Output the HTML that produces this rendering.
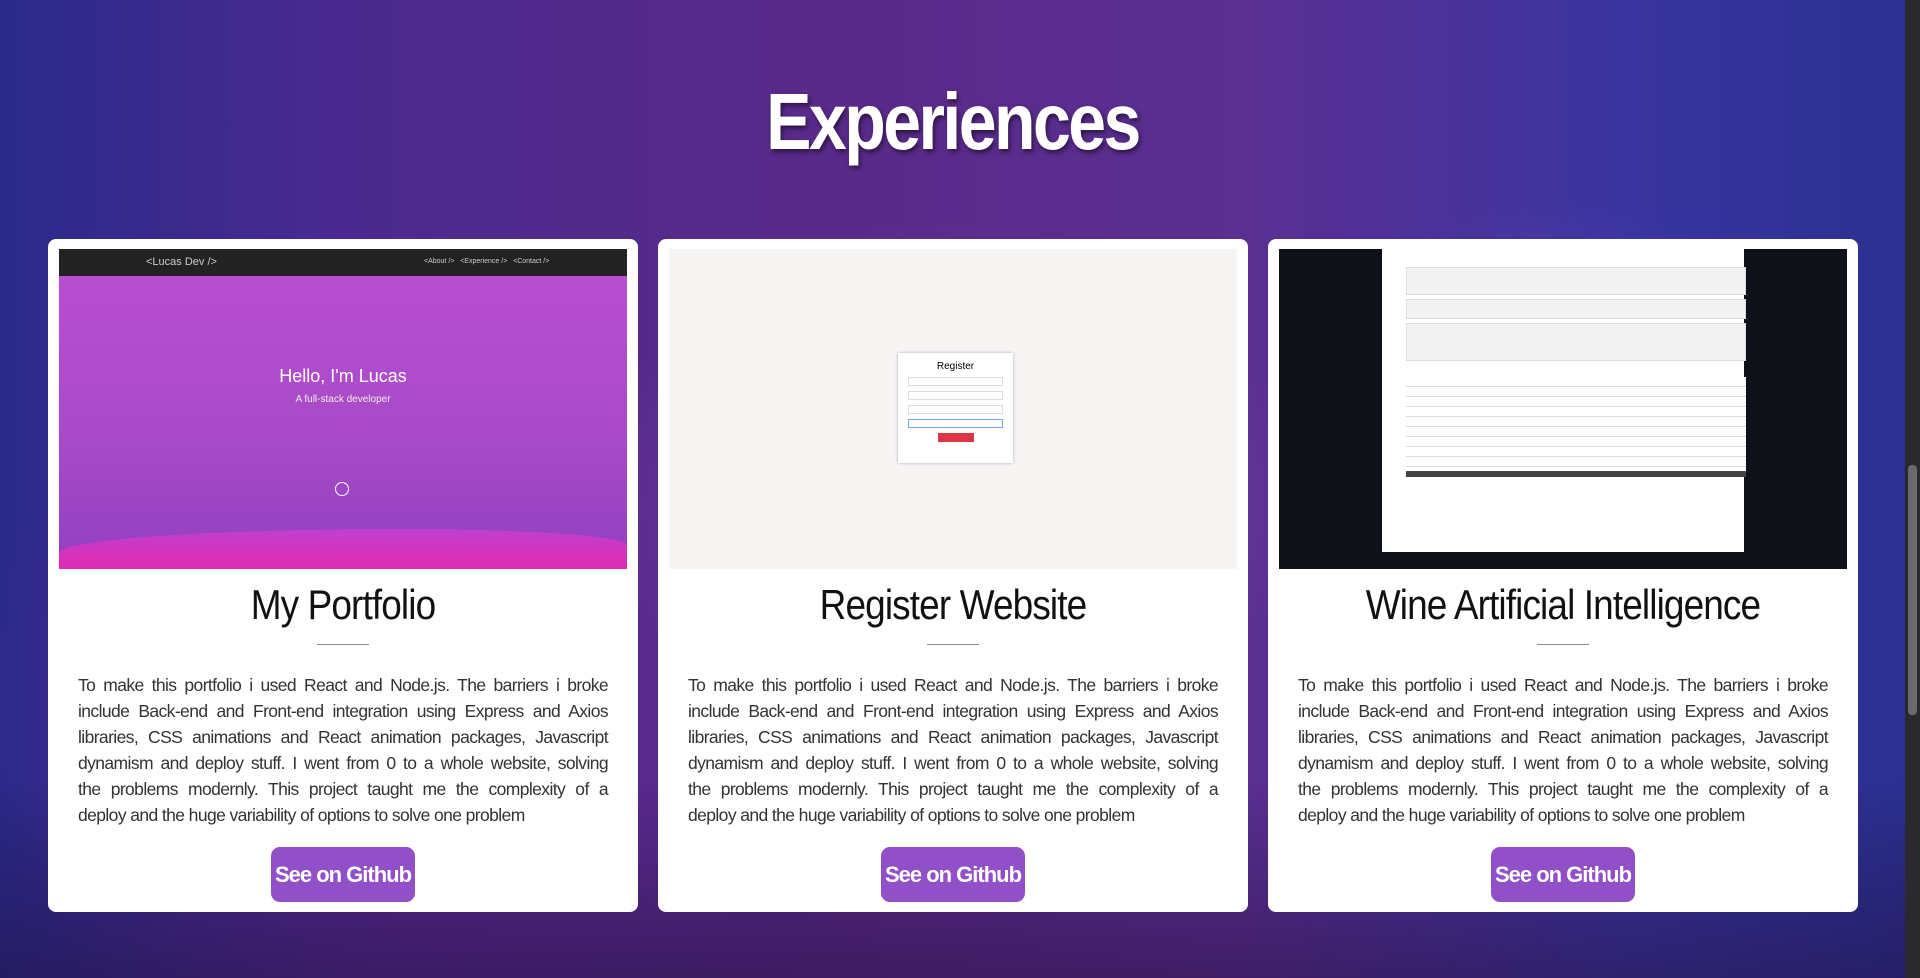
<!DOCTYPE html>
<html><head><meta charset="utf-8"><style>
*{margin:0;padding:0;box-sizing:border-box}
html,body{width:1920px;height:978px;overflow:hidden}
body{font-family:"Liberation Sans",sans-serif;position:relative;
background:
radial-gradient(ellipse 500px 400px at 950px 500px,rgba(170,90,200,.55),transparent 70%),
radial-gradient(ellipse 400px 500px at 1550px 550px,rgba(140,90,220,.5),transparent 70%),
radial-gradient(ellipse 600px 600px at 400px 700px,rgba(110,40,150,.6),transparent 70%),
linear-gradient(90deg,#2a2a8a 0%,#4a2a8e 18%,#5a2a8a 45%,#5a2f92 65%,#3a35a0 85%,#2a2f90 100%);}
.dark{position:absolute;left:0;right:0;bottom:0;height:200px;background:linear-gradient(transparent,rgba(30,10,50,.45))}
.scroll{position:absolute;right:0;top:0;width:15px;height:978px;background:#2a2a2e}
.thumb{position:absolute;right:3px;top:465px;width:9px;height:250px;background:#6a6a70;border-radius:4px}
h1{position:absolute;left:0;width:1905px;top:76px;text-align:center;color:#fff;font-size:80px;font-weight:bold;letter-spacing:-3px;text-shadow:2px 3px 5px rgba(0,0,0,.5);transform:scaleX(.85)}
.card{position:absolute;top:239px;width:590px;height:673px;background:#fff;border-radius:8px}
.img{position:absolute;left:11px;top:10px;width:568px;height:320px}
.card h2{position:absolute;left:0;right:0;text-align:center;font-size:42px;font-weight:normal;color:#111;letter-spacing:-1px;top:342px;transform:scaleX(.88)}
.line{position:absolute;left:269px;top:405px;width:52px;height:1px;background:#888}
.card p{position:absolute;left:30px;right:30px;top:433px;font-size:17.5px;line-height:26px;color:#333;letter-spacing:-.6px}
.card p span{display:block;text-align:justify;text-align-last:justify;white-space:nowrap}
.card p span:last-child{text-align-last:left}
.btn{position:absolute;left:223px;top:608px;width:144px;height:55px;background:#9150c8;border-radius:9px;color:#fff;font-weight:bold;font-size:22px;text-align:center;line-height:55px;letter-spacing:-1px;white-space:nowrap}
</style></head><body>
<div class="dark"></div>
<h1>Experiences</h1>

<div class="card" style="left:48px">
<div class="img" style="background:linear-gradient(180deg,#222 0,#222 27px,#b84fd0 27px,#a84ac8 60%,#9040c0 100%)">
<div style="position:absolute;left:87px;top:7px;color:#ccc;font-size:11px">&lt;Lucas Dev /&gt;</div>
<div style="position:absolute;left:365px;top:9px;color:#ccc;font-size:7px">&lt;About /&gt; &nbsp; &lt;Experience /&gt; &nbsp; &lt;Contact /&gt;</div>
<div style="position:absolute;left:0;right:0;bottom:0;height:40px;background:linear-gradient(#c040d0,#e02ab0);border-radius:60% 40% 0 0"></div>
<div style="position:absolute;left:0;right:0;top:117px;text-align:center;color:#fff;font-size:18px">Hello, I'm Lucas</div>
<div style="position:absolute;left:0;right:0;top:145px;text-align:center;color:#eee;font-size:10px">A full-stack developer</div>
<div style="position:absolute;left:276px;top:233px;width:14px;height:14px;border:1px solid #fff;border-radius:50%"></div>
</div>
<h2>My Portfolio</h2><div class="line"></div>
<p><span>To make this portfolio i used React and Node.js. The barriers i broke</span><span>include Back-end and Front-end integration using Express and Axios</span><span>libraries, CSS animations and React animation packages, Javascript</span><span>dynamism and deploy stuff. I went from 0 to a whole website, solving</span><span>the problems modernly. This project taught me the complexity of a</span><span>deploy and the huge variability of options to solve one problem</span></p>
<div class="btn">See on Github</div>
</div>

<div class="card" style="left:658px">
<div class="img" style="background:#f6f5f4">
<div style="position:absolute;left:229px;top:104px;width:115px;height:110px;background:#fff;box-shadow:0 0 3px rgba(0,0,0,.3)">
<div style="text-align:center;font-size:10px;margin-top:8px">Register</div>
<div style="margin:5px 10px;height:9px;border:1px solid #ddd"></div>
<div style="margin:5px 10px;height:9px;border:1px solid #ddd"></div>
<div style="margin:5px 10px;height:9px;border:1px solid #ddd"></div>
<div style="margin:5px 10px;height:9px;border:1px solid #7ae"></div>
<div style="margin:5px auto;width:36px;height:9px;background:#dc3545"></div>
</div></div>
<h2>Register Website</h2><div class="line"></div>
<p><span>To make this portfolio i used React and Node.js. The barriers i broke</span><span>include Back-end and Front-end integration using Express and Axios</span><span>libraries, CSS animations and React animation packages, Javascript</span><span>dynamism and deploy stuff. I went from 0 to a whole website, solving</span><span>the problems modernly. This project taught me the complexity of a</span><span>deploy and the huge variability of options to solve one problem</span></p>
<div class="btn">See on Github</div>
</div>

<div class="card" style="left:1268px">
<div class="img" style="background:#0e1117">
<div style="position:absolute;left:103px;top:0;width:362px;height:303px;background:#fff">
<div style="position:absolute;left:24px;top:18px;width:340px;height:28px;background:#f3f3f3;border:1px solid #ddd"></div>
<div style="position:absolute;left:24px;top:50px;width:340px;height:20px;background:#f3f3f3;border:1px solid #ddd"></div>
<div style="position:absolute;left:24px;top:74px;width:340px;height:38px;background:#f3f3f3;border:1px solid #ddd"></div>
<div style="position:absolute;left:24px;top:128px;width:340px;height:100px;background:repeating-linear-gradient(#fff 0,#fff 9px,#ddd 9px,#ddd 10px)"></div>
<div style="position:absolute;left:24px;top:222px;width:340px;height:6px;background:#444"></div>
</div></div>
<h2>Wine Artificial Intelligence</h2><div class="line"></div>
<p><span>To make this portfolio i used React and Node.js. The barriers i broke</span><span>include Back-end and Front-end integration using Express and Axios</span><span>libraries, CSS animations and React animation packages, Javascript</span><span>dynamism and deploy stuff. I went from 0 to a whole website, solving</span><span>the problems modernly. This project taught me the complexity of a</span><span>deploy and the huge variability of options to solve one problem</span></p>
<div class="btn">See on Github</div>
</div>

<div class="scroll"><div class="thumb"></div></div>
</body></html>
